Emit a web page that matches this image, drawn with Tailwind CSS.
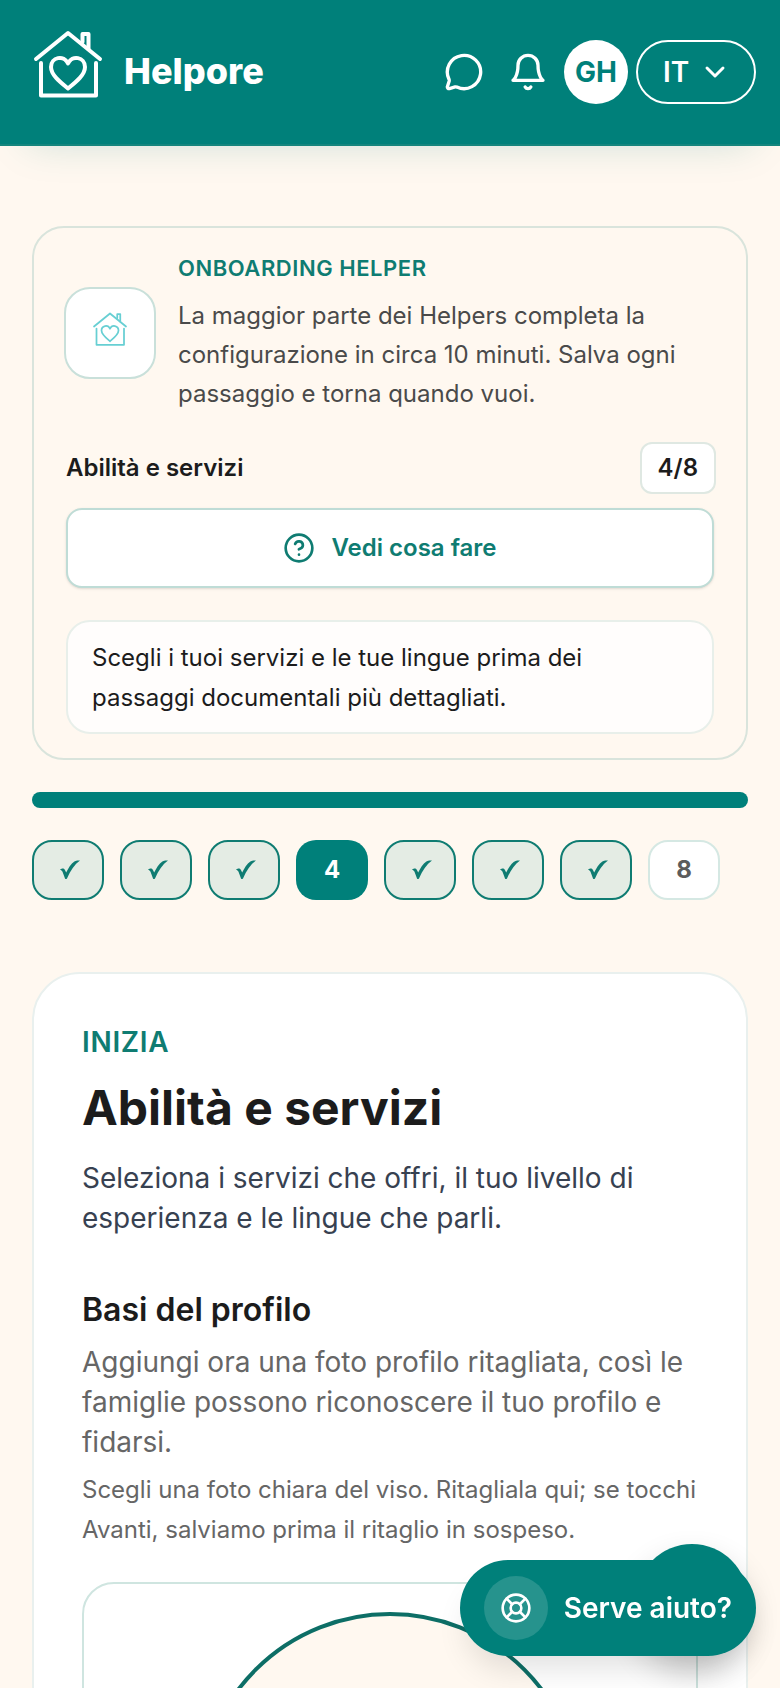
<!DOCTYPE html>
<html lang="it">
<head>
    <meta charset="UTF-8">
    <meta name="viewport" content="width=device-width,initial-scale=1.0">
    <title>Helpore - Abilità e servizi</title>
    <script src="https://cdn.jsdelivr.net/npm/@tailwindcss/browser@4"></script>
</head>

<body class="flex h-screen flex-col overflow-hidden bg-[#fff8f0] font-['Inter',sans-serif] text-[#1c1c1c]">

<!-- Shared icons: house + heart logo, step check -->
<svg class="hidden" aria-hidden="true">
    <symbol id="logo" viewBox="0 0 72 72" fill="none" stroke="currentColor" stroke-linecap="round" stroke-linejoin="round">
        <path d="M4 31 36 5l32 26"/>
        <path d="M50.5 14V6h6v15"/>
        <path d="M9 35v32.500h55V35"/>
        <path d="M36 60.500C28 54 19 47 19 39c0-10 13-12.500 17-3.500 4-9 17-6.500 17 3.500 0 8-9 15-17 21.500z"/>
    </symbol>
    <symbol id="check" viewBox="0 0 20 20" fill="currentColor">
        <path d="M0 10C1 8.500 3.800 7.800 4.800 9.800L6.200 12.600C9 6.500 12.500 2.200 15.500 1 17 .4 18.800.4 20 .5 14.500 4.500 10.500 10.500 7 18.400 6.400 19.200 5.300 19.200 5 18.400 4 15.800 3.200 13.500 2.400 11.600 1.800 10.400 1 9.900 0 10z"/>
    </symbol>
</svg>

<!-- Header -->
<header class="relative z-10 flex h-[146px] shrink-0 items-center justify-between border-b-2 border-[#14857d] bg-[#00807a] pr-6 pl-8 text-white shadow-[0_24px_40px_-28px_rgba(0,128,122,0.22)]">
    <a href="#" class="flex items-center gap-5 pb-0.5">
        <svg class="-mt-3.5 size-[72px] stroke-4" aria-hidden="true"><use href="#logo"/></svg>
        <span class="text-[36px] leading-10 font-extrabold">Helpore</span>
    </a>
    <nav class="flex items-center gap-2">
        <button type="button" aria-label="Messaggi" class="flex h-16 w-14 items-center justify-center">
            <svg class="size-10" viewBox="0 0 24 24" fill="none" stroke="currentColor" stroke-width="2" stroke-linecap="round" stroke-linejoin="round">
                <path d="M2.992 16.342a2 2 0 0 1 .094 1.167l-1.065 3.290a1 1 0 0 0 1.236 1.168l3.413-.998a2 2 0 0 1 1.099.092 10 10 0 1 0-4.777-4.719"/>
            </svg>
        </button>
        <button type="button" aria-label="Notifiche" class="flex h-16 w-14 items-center justify-center">
            <svg class="size-10" viewBox="0 0 24 24" fill="none" stroke="currentColor" stroke-width="2" stroke-linecap="round" stroke-linejoin="round">
                <path d="M6 8a6 6 0 0 1 12 0c0 7 3 9 3 9H3s3-2 3-9"/>
                <path d="M10.3 21a1.940 1.940 0 0 0 3.400 0"/>
            </svg>
        </button>
        <button type="button" class="size-16 rounded-full bg-white text-[28px] font-bold text-[#00807a]">GH</button>
        <button type="button" class="flex h-16 w-[120px] items-center justify-center gap-2.5 rounded-full border-2 border-white pl-0.5 text-[28px] font-semibold">
            IT
            <svg class="size-8" viewBox="0 0 24 24" fill="none" stroke="currentColor" stroke-width="2.2" stroke-linecap="round" stroke-linejoin="round">
                <path d="m6 9 6 6 6-6"/>
            </svg>
        </button>
    </nav>
</header>

<main class="flex-1 overflow-y-auto px-8 pt-20 pb-8">
    <!-- Onboarding summary -->
    <section class="rounded-[32px] border-2 border-[#d9e4dc] px-8 py-6">
        <div class="flex items-center gap-6">
            <div class="-mx-0.5 flex size-[92px] shrink-0 items-center justify-center rounded-[26px] border-2 border-[#c9e0da] bg-white pb-2 text-[#67cfd3]">
                <svg class="size-9 stroke-[3.5]" aria-hidden="true"><use href="#logo"/></svg>
            </div>
            <div>
                <p class="text-[22px] leading-8 font-semibold tracking-wide text-[#0f7c72] uppercase">Onboarding Helper</p>
                <p class="mt-3 text-2xl leading-[39px] text-[#4a4a4a]">La maggior parte dei Helpers completa la configurazione in circa 10 minuti. Salva ogni passaggio e torna quando vuoi.</p>
            </div>
        </div>

        <div class="mt-[29px] flex items-center justify-between">
            <p class="text-2xl font-semibold">Abilità e servizi</p>
            <span class="-mr-0.5 flex h-[52px] items-center rounded-xl border-2 border-[#dfe8e2] bg-white px-4 text-2xl font-semibold">4/8</span>
        </div>

        <button type="button" class="mt-[14px] flex h-20 w-full items-center justify-center gap-4 rounded-2xl border-2 border-[#bfdcd6] bg-white text-2xl font-semibold text-[#0f7c72] shadow-sm">
            <svg class="size-8" viewBox="0 0 24 24" fill="none" stroke="currentColor" stroke-width="2" stroke-linecap="round" stroke-linejoin="round">
                <circle cx="12" cy="12" r="10"/>
                <path d="M9.090 9a3 3 0 0 1 5.830 1c0 2-3 3-3 3"/>
                <path d="M12 17h.01"/>
            </svg>
            Vedi cosa fare
        </button>

        <p class="mt-8 rounded-3xl border-2 border-[#e8efea] bg-[#fffdfc] px-6 pt-4 pb-[14px] text-2xl leading-10">Scegli i tuoi servizi e le tue lingue prima dei passaggi documentali più dettagliati.</p>
    </section>

    <div class="mt-8 h-4 rounded-full bg-[#00807a]"></div>

    <!-- Steps -->
    <nav class="mt-8 flex gap-4 text-2xl font-bold">
        <button type="button" aria-label="1" class="flex h-[60px] w-[72px] items-center justify-center rounded-[20px] border-2 border-[#0f7c72] bg-[#e4ece4] pl-1 text-[#0f7c72]"><svg class="size-5"><use href="#check"/></svg></button>
        <button type="button" aria-label="2" class="flex h-[60px] w-[72px] items-center justify-center rounded-[20px] border-2 border-[#0f7c72] bg-[#e4ece4] pl-1 text-[#0f7c72]"><svg class="size-5"><use href="#check"/></svg></button>
        <button type="button" aria-label="3" class="flex h-[60px] w-[72px] items-center justify-center rounded-[20px] border-2 border-[#0f7c72] bg-[#e4ece4] pl-1 text-[#0f7c72]"><svg class="size-5"><use href="#check"/></svg></button>
        <button type="button" aria-current="step" class="h-[60px] w-[72px] rounded-[20px] bg-[#00807a] text-white">4</button>
        <button type="button" aria-label="5" class="flex h-[60px] w-[72px] items-center justify-center rounded-[20px] border-2 border-[#0f7c72] bg-[#e4ece4] pl-1 text-[#0f7c72]"><svg class="size-5"><use href="#check"/></svg></button>
        <button type="button" aria-label="6" class="flex h-[60px] w-[72px] items-center justify-center rounded-[20px] border-2 border-[#0f7c72] bg-[#e4ece4] pl-1 text-[#0f7c72]"><svg class="size-5"><use href="#check"/></svg></button>
        <button type="button" aria-label="7" class="flex h-[60px] w-[72px] items-center justify-center rounded-[20px] border-2 border-[#0f7c72] bg-[#e4ece4] pl-1 text-[#0f7c72]"><svg class="size-5"><use href="#check"/></svg></button>
        <button type="button" class="h-[60px] w-[72px] rounded-[20px] border-2 border-[#d5e8e3] bg-white text-[#5c5c5c]">8</button>
    </nav>

    <!-- Current step -->
    <section class="mt-18 rounded-[48px] border-2 border-[#e9f0ee] bg-white p-12">
        <p class="text-[28px] leading-10 font-semibold tracking-wide text-[#0f7c72] uppercase">Inizia</p>
        <h1 class="mt-4 text-5xl leading-[60px] font-bold">Abilità e servizi</h1>
        <p class="mt-5 text-[28px] leading-10 text-[#374151]">Seleziona i servizi che offri, il tuo livello di esperienza e le lingue che parli.</p>

        <h2 class="mt-[52px] text-[32px] leading-10 font-semibold">Basi del profilo</h2>
        <p class="mt-3 text-[28px] leading-10 text-[#666666]">Aggiungi ora una foto profilo ritagliata, così le famiglie possono riconoscere il tuo profilo e fidarsi.</p>
        <p class="mt-2 text-2xl leading-10 text-[#666666]">Scegli una foto chiara del viso. Ritagliala qui; se tocchi Avanti, salviamo prima il ritaglio in sospeso.</p>

        <div class="mt-8 flex justify-center rounded-[32px] border-2 border-[#cfe5e0] p-7">
            <div class="size-96 rounded-full border-4 border-[#0d6e66] bg-[#fff8f0]"></div>
        </div>
    </section>
</main>

<!-- Floating help -->
<div class="fixed right-8 bottom-8 z-20 size-28 rounded-full bg-[#00807a] shadow-[0_16px_32px_rgba(0,0,0,0.2)]"></div>
<button type="button" class="fixed right-6 bottom-8 z-20 flex h-24 items-center gap-4 rounded-full bg-[#00807a] px-6 text-[28px] font-semibold text-white shadow-[0_20px_32px_-8px_rgba(0,0,0,0.12)]">
    <span class="flex size-16 items-center justify-center rounded-full bg-white/15">
        <svg class="size-8" viewBox="0 0 24 24" fill="none" stroke="currentColor" stroke-width="2" stroke-linecap="round" stroke-linejoin="round">
            <circle cx="12" cy="12" r="10"/>
            <path d="m4.930 4.930 4.240 4.240M14.830 9.170l4.240-4.240M14.830 14.830l4.240 4.240M9.170 14.830l-4.240 4.240"/>
            <circle cx="12" cy="12" r="4"/>
        </svg>
    </span>
    Serve aiuto?
</button>
</body>
</html>
